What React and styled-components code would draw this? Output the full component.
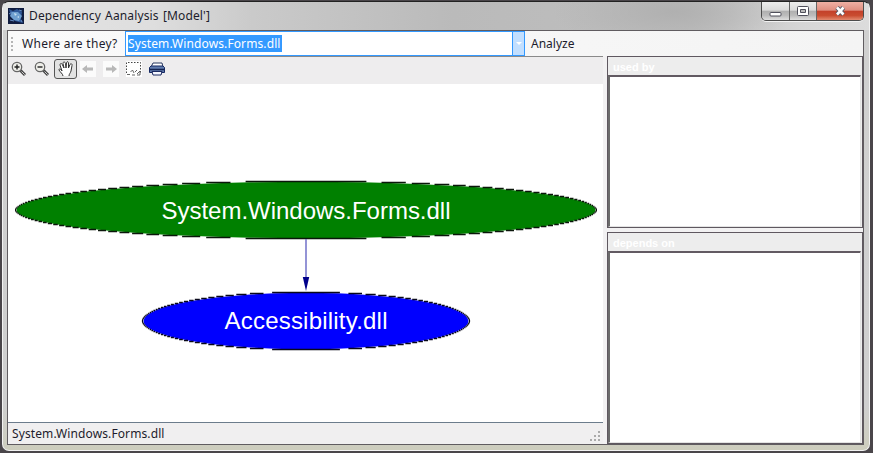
import React from 'react';
import styled, { createGlobalStyle } from 'styled-components';

const Global = createGlobalStyle`
  * { box-sizing: border-box; }
  html, body { margin: 0; background: #3c3c3c; overflow: hidden; }
`;

const Window = styled.div`
  width: 873px;
  height: 453px;
  padding: 1px 3px 2px 2px;
  background: #4a464a;
  font: 12px/16px "Noto Sans", sans-serif;
  color: #1c1c2c;
`;

const Frame = styled.div`
  height: 450px;
  padding: 0 5px 5px 4px;
  display: flex;
  flex-direction: column;
  border: 1px solid #f2f2f2;
  border-top-color: #222;
  border-radius: 7px;
  background: linear-gradient(#d6d6d6, #d0d0d0 30px, #cfcfcf 90%, #cdcdbd);
`;

const TitleBar = styled.header`
  height: 28px;
  margin: 0 -5px 0 -4px;
  padding-left: 5px;
  flex: none;
  display: flex;
  align-items: flex-start;
  border-radius: 6px 6px 0 0;
  background:
    radial-gradient(ellipse 120px 36px at 670px 10px, #b0b0b0, transparent),
    linear-gradient(90deg, #e4e4e4 0, #dedede 150px, #cacaca 250px, #bababa 450px, #bfbfbf 690px, #d6d6d6 800px, #dcdcdc);
`;

const AppIcon = styled.svg`
  width: 16px;
  height: 16px;
  margin-top: 6px;
`;

const Title = styled.h1`
  margin: 5px 0 0 5px;
  flex: 1;
  font-size: 12px;
  line-height: 17px;
  font-weight: 400;
`;

const Fit = styled.span`
  display: block;
  width: ${p => p.$w}px;
  white-space: nowrap;
  text-align-last: justify;
  letter-spacing: ${p => p.$ls || 0}px;
`;

const Controls = styled.div`
  display: flex;
  width: 103px;
  height: 19px;
  margin-right: 5px;
  border: 1px solid #4c4c4c;
  border-top: 0;
  border-radius: 0 0 5px 5px;
  overflow: hidden;
  box-shadow: 0 1px 0 #f3f3f3;
`;

const Control = styled.button`
  width: ${p => p.$w}px;
  padding: 0;
  border: 0;
  border-right: ${p => (p.$close ? 0 : '1px solid #666')};
  background: ${p => p.$close
    ? 'linear-gradient(#efb0a4, #df8e80 46%, #c3402a 50%, #c94c30 75%, #e28a70)'
    : 'linear-gradient(#ededed, #dadada 46%, #afafaf 50%, #bcbcbc 75%, #dedede)'};
  svg { display: block; width: 100%; height: 19px; }
`;

const Client = styled.main`
  flex: 1;
  min-height: 0;
  display: flex;
  flex-direction: column;
  border: 1px solid #605c60;
  background: #f2f1f2;
`;

const QueryBar = styled.div`
  height: 25px;
  flex: none;
  display: flex;
  align-items: center;
  background: linear-gradient(90deg, #fafafa, #f4f4f4);
`;

const Grip = styled.i`
  width: 2px;
  height: 14px;
  margin: 0 9px 0 3px;
  background: repeating-linear-gradient(#b5b5b5 0 2px, transparent 2px 4px);
`;

const Combo = styled.div`
  width: 400px;
  height: 25px;
  margin: 0 6px 0 8px;
  display: flex;
  align-items: center;
  justify-content: space-between;
  border: 1px solid #3399ff;
  background: #fff;
`;

const Selected = styled.span`
  height: 17px;
  margin-left: 2px;
  line-height: 17px;
  background: #3399ff;
  color: #fff;
`;

const Arrow = styled.span`
  width: 12px;
  height: 23px;
  display: grid;
  place-items: center;
  border-left: 1px solid #3399ff;
  background: #c2dfff;
  &::after {
    content: '';
    border: 3px solid transparent;
    border-top: 3px solid #fff;
    border-bottom: 0;
  }
`;

const Body = styled.div`
  flex: 1;
  min-height: 0;
  display: flex;
`;

const Viewer = styled.section`
  width: 595px;
  display: flex;
  flex-direction: column;
  border-top: 1px solid #8a8a8a;
`;

const ToolBar = styled.div`
  height: 27px;
  flex: none;
  padding: 2px 0 0;
  display: flex;
  align-items: flex-start;
  background: #eeedee;
`;

const Tool = styled.button`
  width: 23px;
  height: 20px;
  padding: ${p => (p.$active ? '0' : '0 2px 0 0')};
  display: grid;
  place-items: center;
  border: ${p => (p.$active ? '1px solid #555' : '0')};
  border-radius: 3px;
  background: ${p => (p.$active ? '#e2e2e2' : 'transparent')};
  svg { width: 16px; height: 16px; display: block; }
`;

const Canvas = styled.div`
  flex: 1;
  min-height: 0;
  background: #fff;
  svg { display: block; }
`;

const NodeLabel = styled.text`
  font: 24px "Liberation Sans", Arial, sans-serif;
  fill: #fff;
`;

const Status = styled.footer`
  height: 22px;
  flex: none;
  display: flex;
  justify-content: space-between;
  align-items: center;
  padding: 0 2px 0 4px;
  border-top: 1px solid #6c7c8c;
  background: #f0eff0;
  svg { margin-top: 5px; }
`;

const Side = styled.aside`
  width: 256px;
  margin-left: 4px;
  display: flex;
  flex-direction: column;
  gap: 4px;
`;

const Panel = styled.section`
  height: ${p => p.$h}px;
  flex: none;
  display: flex;
  flex-direction: column;
  border: 1px solid #5f5860;
  background: #ededed;
`;

const PanelTitle = styled.h2`
  height: 18px;
  margin: 0;
  padding: 2px 0 0 5px;
  flex: none;
  color: #fff;
  font: 700 11px/16px "Liberation Sans", Arial, sans-serif;
`;

const List = styled.div`
  flex: 1;
  margin-right: 1px;
  border: 1px solid #e3e3e3;
  border-top: 2px solid #625a62;
  border-left: 2px solid #6b6b6b;
  background: #fff;
`;

const Magnifier = ({ plus }) => (
  <svg viewBox="0 0 16 16" fill="none">
    <path d="M9.300 9.300l4.700 4.700" stroke="#444" strokeWidth="3" />
    <path d="M10.500 10.500l3.200 3.200" stroke="#ccc" strokeWidth="1" />
    <circle cx="6" cy="6" r="4.700" fill="#efefea" stroke="#666" strokeWidth="1.300" />
    <path d={plus ? 'M3.500 6h5M6 3.500v5' : 'M3.500 6h5'} stroke="#222" strokeWidth="1.400" />
  </svg>
);

const Hand = () => (
  <svg viewBox="0 0 16 16">
    <path d="M5 15c0-2-3-4-4-6 0-2 2-1 3 1L2 4c0-2 2-2 2.500 0L6 7 5 2.500c0-2 2-2 2.500 0L8 7l.5-5c.5-2 2-1.500 2 0L10.500 7 12 3.500c1-1.500 2.500-.5 2 1L13 10c-.5 2-2 3-2 5" fill="#fff" stroke="#333" />
  </svg>
);

const MoveArrow = ({ back }) => (
  <svg viewBox="0 0 16 16">
    <path fill="#fbfbfb" d="M0 0h16v16H0z" />
    <path fill="#b8b8b8" d={back ? 'M2 8l5-4v2.500h6v3H7V12z' : 'M14 8L9 4v2.500H3v3h6V12z'} />
  </svg>
);

const ZoomWindow = () => (
  <svg viewBox="0 0 16 16">
    <path fill="#fff" d="M0 0h16v16H0z" />
    <path d="M.5 12V1.500h14V12" fill="none" stroke="#444" strokeDasharray="1.500 1.500" />
    <path d="M1 13.500h3M4.500 11l2-2 1.500 3M6 14h3M9 11l2-2M11 13l3-3v4h-3" fill="none" stroke="#666" />
  </svg>
);

const Printer = () => (
  <svg viewBox="0 0 16 16">
    <path d="M4 2h9l1 4H2z" fill="#fff" stroke="#26365e" />
    <path d="M.5 6.500L2 5h12l1.500 1.500v5h-15z" fill="#607cae" stroke="#152862" />
    <path d="M1 8.500h14" stroke="#14234f" strokeWidth="1.500" />
    <path d="M3 10.500h10l-1 3.500H4z" fill="#f4f6ff" stroke="#1b2a61" />
  </svg>
);

// Outline stepped one pixel row at a time, with a short break at the end of each step.
function steppedOutline(cx, cy, rx, ry) {
  const half = y => rx * Math.sqrt(Math.max(0, 1 - (y / ry) ** 2));
  let d = '';
  for (let y = -ry; y < ry; y += 1) {
    const a = half(y);
    const b = half(y + 1);
    const inner = Math.min(a, b);
    const run = Math.max(1.2, Math.abs(a - b) * 0.8);
    const row = cy + y + 0.5;
    d += `M${(cx - inner - run).toFixed(1)} ${row}h${run.toFixed(1)}`;
    d += `M${(cx + inner).toFixed(1)} ${row}h${run.toFixed(1)}`;
  }
  return d;
}

const Node = ({ cx, cy, rx, ry, fill, ink }) => (
  <g>
    <ellipse cx={cx} cy={cy} rx={rx - 0.5} ry={ry - 0.8} fill={fill} />
    <path d={steppedOutline(cx, cy, rx, ry)} stroke={ink} strokeWidth="1.400" />
  </g>
);

const Graph = () => (
  <svg width="595" height="338" viewBox="8 84 595 338">
    <Node cx={306} cy={210} rx={290} ry={29} fill="#008000" ink="#0b160b" />
    <path d="M306 239v40" stroke="#7070c8" strokeWidth="1.500" />
    <path d="M302.800 277h6.400L306 291z" fill="#00008b" />
    <Node cx={306} cy={321} rx={163} ry={29} fill="#0000ff" ink="#08081a" />
    <NodeLabel x="161.500" y="219" textLength="289">System.Windows.Forms.dll</NodeLabel>
    <NodeLabel x="224.500" y="329" textLength="163">Accessibility.dll</NodeLabel>
  </svg>
);

export default function App() {
  return (
    <>
      <Global />
      <Window>
        <Frame>
          <TitleBar>
            <AppIcon viewBox="0 0 16 16">
              <path fill="#101c40" d="M0 0h16v16H0z" />
              <path fill="#2e5798" d="M1 1l4 2 4-2 5 3-1 7 2 4-8-2-4-4z" />
              <path fill="#6f9fd0" d="M4 4l6 0 4 4-3 5-5-1-4-4z" />
              <path fill="#c6dff0" d="M6 5l3 1-2 2zM9 9l2-1v2z" />
              <path d="M1 6l3-2M2 12l4 1M11 2l3 1M13 12l1 2" stroke="#638bc2" />
            </AppIcon>
            <Title><Fit $w={181} $ls={0.14}>Dependency Aanalysis [Model']</Fit></Title>
            <Controls>
              <Control $w={28} aria-label="Minimize">
                <svg viewBox="0 0 27 19"><rect x="8" y="10.500" width="11" height="3.500" rx="1" fill="#fff" stroke="#50505c" /></svg>
              </Control>
              <Control $w={27} aria-label="Maximize">
                <svg viewBox="0 0 26 19"><rect x="7.500" y="4.500" width="11" height="9" rx="1" fill="#fff" stroke="#50505c" /><path d="M10.500 7.500h5v3h-5z" fill="#bbb" stroke="#50505c" /></svg>
              </Control>
              <Control $w={46} $close aria-label="Close">
                <svg viewBox="0 0 46 19"><path d="M20 5.500l6.500 7M26.500 5.500l-6.500 7" stroke="#555868" strokeWidth="4.500" /><path d="M20 5.500l6.500 7M26.500 5.500l-6.500 7" stroke="#fff" strokeWidth="2.600" /></svg>
              </Control>
            </Controls>
          </TitleBar>
          <Client>
            <QueryBar>
              <Grip />
              <Fit $w={95} $ls={0.3}>Where are they?</Fit>
              <Combo>
                <Selected><Fit $w={154} $ls={0.11}>System.Windows.Forms.dll</Fit></Selected>
                <Arrow />
              </Combo>
              <Fit $w={44}>Analyze</Fit>
            </QueryBar>
            <Body>
              <Viewer>
                <ToolBar>
                  <Tool aria-label="Zoom in"><Magnifier plus /></Tool>
                  <Tool aria-label="Zoom out"><Magnifier /></Tool>
                  <Tool $active aria-label="Pan"><Hand /></Tool>
                  <Tool aria-label="Back"><MoveArrow back /></Tool>
                  <Tool aria-label="Forward"><MoveArrow /></Tool>
                  <Tool aria-label="Zoom window"><ZoomWindow /></Tool>
                  <Tool aria-label="Print"><Printer /></Tool>
                </ToolBar>
                <Canvas><Graph /></Canvas>
                <Status>
                  <Fit $w={154} $ls={0.11}>System.Windows.Forms.dll</Fit>
                  <svg width="11" height="11"><path d="M8 0h2v2H8zM4 4h2v2H4zM8 4h2v2H8zM0 8h2v2H0zM4 8h2v2H4zM8 8h2v2H8z" fill="#aaa" /></svg>
                </Status>
              </Viewer>
              <Side>
                <Panel $h={172}><PanelTitle>used by</PanelTitle><List /></Panel>
                <Panel $h={212}><PanelTitle>depends on</PanelTitle><List /></Panel>
              </Side>
            </Body>
          </Client>
        </Frame>
      </Window>
    </>
  );
}
